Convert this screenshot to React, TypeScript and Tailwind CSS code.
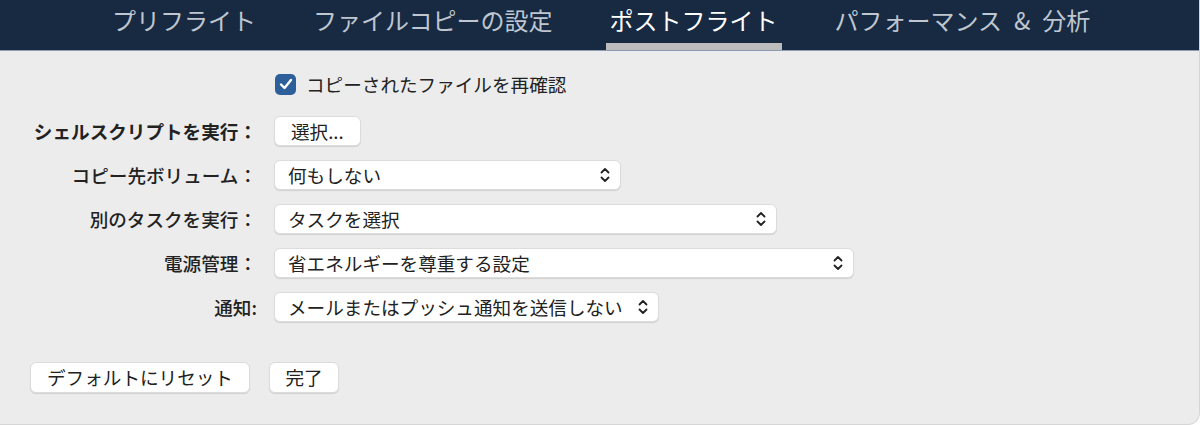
import React from "react";

const font = { fontFamily: '"Noto Sans CJK JP", "Noto Sans", sans-serif' };

function Chevrons() {
  return (
    <svg width="10" height="16" viewBox="0 0 10 16" fill="none" stroke="#222" strokeWidth="1.8" strokeLinecap="round" strokeLinejoin="round">
      <path d="M1.5 5.5 L5 2 L8.5 5.5" />
      <path d="M1.5 10.5 L5 14 L8.5 10.5" />
    </svg>
  );
}

function Select({ text, width }: { text: string; width: string }) {
  return (
    <div className={`${width} h-[30px] bg-white rounded-[6px] border border-[#dcdcdc] shadow-[0_1px_1px_rgba(0,0,0,0.12)] flex items-center justify-between pl-[13px] pr-[10px]`}>
      <span className="text-[18.6px] text-[#222] leading-none">{text}</span>
      <Chevrons />
    </div>
  );
}

function Row({ label, bold, children }: { label: string; bold?: boolean; children: React.ReactNode }) {
  return (
    <div className="flex items-center h-[30px]">
      <div className={`w-[257px] text-right text-[18.6px] text-[#222] leading-none ${bold ? "font-bold" : "font-medium"}`}>{label}</div>
      <div className="ml-[17px] flex">{children}</div>
    </div>
  );
}

export default function App() {
  const tabs = ["プリフライト", "ファイルコピーの設定", "ポストフライト", "パフォーマンス\u2002&\u2002分析"];
  return (
    <div className="w-[1200px] h-[425px] bg-white" style={font}>
      <div className="h-full bg-[#ececec] rounded-br-[12px] border-r border-b border-[#d6d6d6] flex flex-col overflow-hidden">
        <div className="h-[51px] bg-[#172a42] border-b border-[#8d9db4] flex items-end pl-[108px] gap-[49px] shrink-0">
          {tabs.map((t, i) => (
            <div key={t} className="flex flex-col items-stretch">
              <div className={`px-[4px] text-[24px] leading-none pb-[11px] ${i === 2 ? "text-white" : "text-[#bfc6d0]"}`}>{t}</div>
              <div className={`h-[7px] ${i === 2 ? "bg-[#bcbcbc]" : "bg-transparent"}`} />
            </div>
          ))}
        </div>

        <div className="pt-[18px] flex flex-col">
          <div className="flex items-center h-[30px] pl-[275px]">
            <div className="w-[21px] h-[21px] rounded-[5px] bg-[#2d5f9b] flex items-center justify-center">
              <svg width="14" height="12" viewBox="0 0 14 12" fill="none" stroke="white" strokeWidth="2.4" strokeLinecap="round" strokeLinejoin="round">
                <path d="M2 6.5 L5.5 10 L12 2" />
              </svg>
            </div>
            <span className="ml-[10px] text-[18.6px] text-[#222] leading-none">コピーされたファイルを再確認</span>
          </div>

          <div className="mt-[17px] flex flex-col gap-[14px]">
            <Row label="シェルスクリプトを実行：" bold>
              <div className="h-[30px] px-[16px] bg-white rounded-[6px] border border-[#dcdcdc] shadow-[0_1px_1px_rgba(0,0,0,0.12)] flex items-center text-[18.6px] text-[#222] leading-none">選択...</div>
            </Row>
            <Row label="コピー先ボリューム：">
              <Select text="何もしない" width="w-[347px]" />
            </Row>
            <Row label="別のタスクを実行：">
              <Select text="タスクを選択" width="w-[503px]" />
            </Row>
            <Row label="電源管理：">
              <Select text="省エネルギーを尊重する設定" width="w-[580px]" />
            </Row>
            <Row label="通知:">
              <Select text="メールまたはプッシュ通知を送信しない" width="w-[385px]" />
            </Row>
          </div>

          <div className="mt-[40px] pl-[30px] flex gap-[19px]">
            <div className="h-[31px] w-[220px] bg-white rounded-[6px] border border-[#dcdcdc] shadow-[0_1px_1px_rgba(0,0,0,0.12)] flex items-center justify-center text-[18.6px] text-[#222] leading-none">デフォルトにリセット</div>
            <div className="h-[31px] w-[70px] bg-white rounded-[6px] border border-[#dcdcdc] shadow-[0_1px_1px_rgba(0,0,0,0.12)] flex items-center justify-center text-[18.6px] text-[#222] leading-none">完了</div>
          </div>
        </div>
      </div>
    </div>
  );
}
